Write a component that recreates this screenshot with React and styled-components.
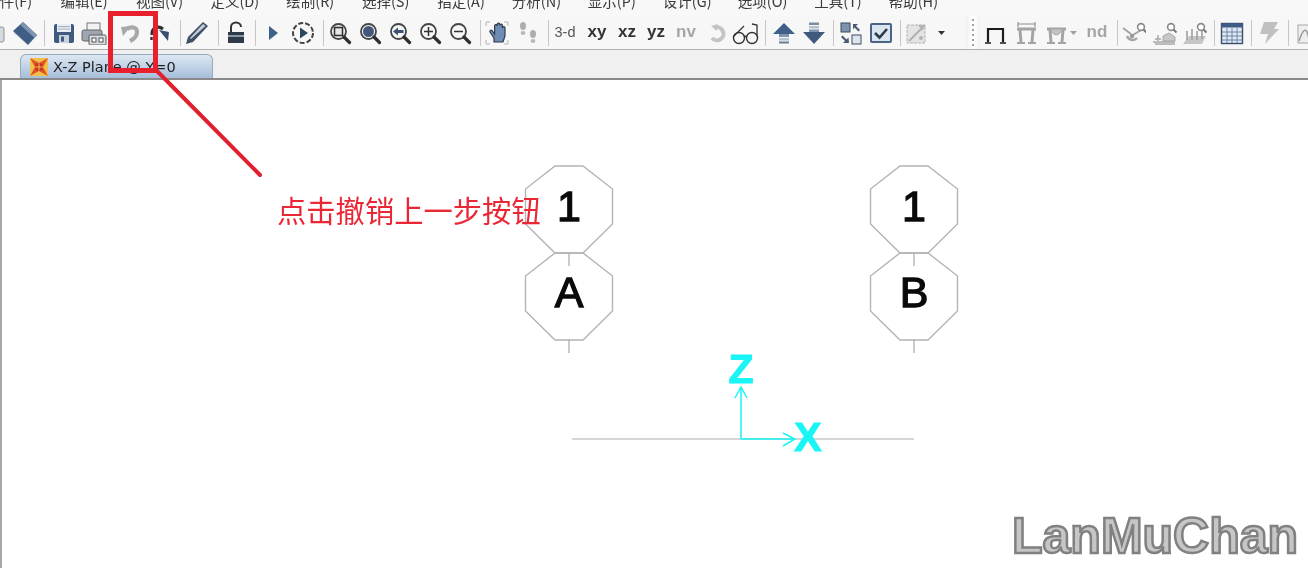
import React from "react";
import styled, { createGlobalStyle } from "styled-components";

const GlobalStyle = createGlobalStyle`
  html, body {
    margin: 0;
    height: 100%;
    overflow: hidden;
    background: #fff;
  }
`;

const Window = styled.div`
  position: relative;
  width: 1308px;
  height: 568px;
  display: flex;
  flex-direction: column;
  overflow: hidden;
  font-family: "Liberation Sans", Arial, sans-serif;
  filter: blur(0.4px);
`;

const MenuBar = styled.div`
  height: 16px;
  flex: none;
  display: flex;
  align-items: flex-start;
  overflow: hidden;
  background: #f8f8f8;
`;

const MenuRow = styled.div`
  display: flex;
  margin: -7px 0 0 -29px;
`;

const MenuItem = styled.span`
  flex: none;
  width: 75.4px;
  text-align: center;
  font: 14.5px/15px "Noto Sans CJK SC", "Liberation Sans", sans-serif;
  color: #3a3a3a;
`;

const Toolbar = styled.div`
  height: 33px;
  flex: none;
  display: flex;
  align-items: center;
  overflow: hidden;
  background: #f7f7f7;
  border-bottom: 1px solid #aeaeae;
`;

const Tool = styled.div`
  flex: none;
  width: ${(p) => p.$w || 30}px;
  margin-left: ${(p) => p.$ml || 0}px;
  height: 100%;
  display: flex;
  align-items: center;
  justify-content: center;
`;

const ClippedTool = styled(Tool)`
  justify-content: flex-end;
  overflow: hidden;
`;

const Separator = styled.div`
  flex: none;
  width: ${(p) => p.$w || 10}px;
  margin-left: ${(p) => p.$ml || 0}px;
  height: 26px;
  display: flex;
  justify-content: center;
  &::before {
    content: "";
    width: 1px;
    background: #c6c6c6;
  }
`;

const Grip = styled.div`
  flex: none;
  width: 14px;
  height: 100%;
  margin-left: ${(p) => p.$ml || 0}px;
  background: linear-gradient(90deg, #f1f1f1, #ffffff 55%, #f1f1f1);
  display: flex;
  flex-direction: column;
  justify-content: center;
  align-items: center;
  gap: 3px;
  & > i {
    width: 2px;
    height: 2px;
    background: #a0a0a0;
  }
`;

const TextTool = styled(Tool)`
  font-size: ${(p) => p.$size || 17}px;
  font-weight: ${(p) => (p.$plain ? 400 : 700)};
  color: ${(p) => p.$color || "#333"};
  padding-bottom: 2px;
  box-sizing: border-box;
`;

const TabStrip = styled.div`
  height: 28px;
  flex: none;
  display: flex;
  align-items: flex-end;
  padding-left: 20px;
  background: #f0f0f0;
  border-bottom: 2px solid #8a8a8a;
`;

const Tab = styled.div`
  width: 193px;
  height: 24px;
  box-sizing: border-box;
  display: flex;
  align-items: center;
  gap: 5px;
  padding-left: 9px;
  border: 1px solid #97a9be;
  border-bottom: none;
  border-radius: 6px 6px 0 0;
  background: linear-gradient(180deg, #dde7f2, #a6bedb);
  font: 14.5px "DejaVu Sans", sans-serif;
  color: #222;
  white-space: nowrap;
`;

const Canvas = styled.div`
  flex: 1;
  min-height: 0;
  background: #fff;
  border-left: 2px solid #a8a8a8;
`;

const Drawing = styled.svg`
  display: block;
  margin-left: -2px;
`;

const BubbleLabel = styled.text`
  font-family: "Liberation Sans", Arial, sans-serif;
  font-size: 43px;
  fill: #0a0a0a;
  stroke: #0a0a0a;
  stroke-width: 1.3px;
  text-anchor: middle;
`;

const AxisLabel = styled.text`
  font-family: "Liberation Sans", Arial, sans-serif;
  font-size: 41px;
  font-weight: 700;
  fill: #19f5f5;
  stroke: #19f5f5;
  stroke-width: 1px;
  text-anchor: middle;
`;

const CalloutBox = styled.div`
  position: absolute;
  left: 108px;
  top: 11px;
  width: 50px;
  height: 62px;
  box-sizing: border-box;
  border: 5px solid #e8202e;
`;

const CalloutLine = styled.svg`
  position: absolute;
  left: 150px;
  top: 65px;
`;

const CalloutText = styled.div`
  position: absolute;
  left: 277px;
  top: 188px;
  font: 29.3px/42px "Noto Sans CJK SC", sans-serif;
  color: #ea2735;
  white-space: nowrap;
`;

const Watermark = styled.div`
  position: absolute;
  left: 1012px;
  top: 507px;
  font: 700 50px/58px "Liberation Sans", Arial, sans-serif;
  color: #c6c6c6;
  -webkit-text-stroke: 2.5px #818181;
  white-space: nowrap;
`;

const I = ({ w = 24, h = 24, children }) => (
  <svg width={w} height={h} viewBox={`0 0 ${w} ${h}`} style={{ flex: "none" }}>
    {children}
  </svg>
);

const Lens = ({ children, stroke = "#444" }) => (
  <I>
    <circle cx="10.5" cy="10.5" r="7.5" fill="#f4f6f8" stroke={stroke} strokeWidth="1.8" />
    <path d="M16 16l5.5 5.5" stroke="#2f2f2f" strokeWidth="3.2" strokeLinecap="round" />
    {children}
  </I>
);

const Frame = ({ color = "#a4a4a4", children }) => (
  <I w={28}>
    <path d="M5 8h19" stroke={color} strokeWidth="3" />
    <path d="M8 9L9 21M21 9L20 21" stroke={color} strokeWidth="3" fill="none" />
    <path d="M5 22h8M16 22h8" stroke={color} strokeWidth="1.8" />
    {children}
  </I>
);

const Magnifier = () => (
  <g>
    <circle cx="19" cy="6" r="3.4" fill="#fff" stroke="#8a8a8a" strokeWidth="1.6" />
    <path d="M21.5 8.5l3 3" stroke="#777" strokeWidth="2" />
  </g>
);

const icons = {
  clip: (
    <I w={8}>
      <rect x="-12" y="6" width="16" height="15" rx="2" fill="#d5dadf" stroke="#8d949c" />
    </I>
  ),
  tag: (
    <I w={26}>
      <path d="M1 10 L11 1 L25 14 L16 24 Z" fill="#3f5e84" />
      <path d="M11 1 L25 14 L22.5 17 L8.5 4 Z" fill="#7f96b0" />
      <path d="M1 10 L16 24 L17 25 L2 12Z" fill="#9fb0c2" />
    </I>
  ),
  save: (
    <I>
      <rect x="2" y="3" width="20" height="19" rx="2" fill="#3f5a7e" />
      <rect x="5" y="3" width="14" height="8" fill="#e8edf2" />
      <path d="M6 5.5h12M6 8h12" stroke="#9fb0c2" />
      <rect x="7" y="14" width="10" height="8" fill="#c8d2dd" />
      <rect x="9" y="15.5" width="3" height="5" fill="#3f5a7e" />
    </I>
  ),
  print: (
    <I w={26}>
      <rect x="6" y="2" width="13" height="8" fill="#f2f2f2" stroke="#777" />
      <rect x="1" y="9" width="20" height="11" rx="2" fill="#9ea6b0" stroke="#666" />
      <rect x="8" y="14" width="17" height="10" rx="1" fill="#d8dde2" stroke="#5a5a5a" />
      <rect x="11" y="17" width="4" height="4" fill="#fff" stroke="#555" />
      <rect x="18" y="17" width="4" height="4" fill="#fff" stroke="#555" />
    </I>
  ),
  undo: (
    <I>
      <path d="M9 8 C13 5 19 6 19 11 C19 15 16 18 12 20" fill="none" stroke="#a8a8a8" strokeWidth="4.2" />
      <path d="M3 6 L13 5 L5 15 Z" fill="#a8a8a8" />
    </I>
  ),
  redo: (
    <I>
      <path d="M4 14 C3 7 10 4 15 8" fill="none" stroke="#2e2e2e" strokeWidth="3" />
      <path d="M3.5 16v3" stroke="#2e2e2e" strokeWidth="2.4" />
      <path d="M11 9 L21 11 L20 20 Z" fill="#3b4f6a" />
    </I>
  ),
  pencil: (
    <I>
      <path d="M18 1 L23 5 L8 21 L1 23 L3 16 Z" fill="#3f5068" />
      <path d="M18 3 L20.5 5 L6 18 L5 17 Z" fill="#c4ced8" />
    </I>
  ),
  lock: (
    <I w={18}>
      <path d="M4 11 V6 a5 4.5 0 0 1 10 0" fill="none" stroke="#333" strokeWidth="2" />
      <rect x="1" y="11" width="16" height="11" fill="#2e3a48" />
      <rect x="1" y="14" width="16" height="2" fill="#8b98a6" />
    </I>
  ),
  play: (
    <I w={12}>
      <path d="M2 5 L11 12 L2 19 Z" fill="#3a6288" />
    </I>
  ),
  cplay: (
    <I>
      <circle cx="12" cy="12" r="10" fill="none" stroke="#444" strokeWidth="2" strokeDasharray="5 2" />
      <path d="M9 6.5 L17 12 L9 17.5 Z" fill="#2f4662" />
    </I>
  ),
  zoomBox: (
    <Lens>
      <rect x="6.5" y="6.5" width="8" height="8" fill="#e6e9ec" stroke="#333" strokeWidth="1.6" />
    </Lens>
  ),
  zoomAll: (
    <Lens>
      <circle cx="10.5" cy="10.5" r="5.5" fill="#44597a" />
    </Lens>
  ),
  zoomPrev: (
    <Lens>
      <path d="M5 10.5 L10 6.5 V9 H15.5 V12 H10 V14.5 Z" fill="#3b5270" />
    </Lens>
  ),
  zoomIn: (
    <Lens>
      <path d="M6 10.5h9M10.5 6v9" stroke="#333" strokeWidth="1.5" />
    </Lens>
  ),
  zoomOut: (
    <Lens>
      <path d="M6 10.5h9" stroke="#333" strokeWidth="1.5" />
    </Lens>
  ),
  hand: (
    <I>
      <path d="M1 5V1h4M19 1h4v4M1 19v4h4M19 23h4v-4" fill="none" stroke="#b5b5b5" />
      <path d="M5 11 L9 17 V21 H18 L20 15 V7 a1.3 1.3 0 0 0 -2.6 0 V4.5 a1.3 1.3 0 0 0 -2.6 0 V3.5 a1.3 1.3 0 0 0 -2.6 0 V5 a1.3 1.3 0 0 0 -2.6 0 V13 L7 9.5 a1.3 1.3 0 0 0 -2 1.5Z" fill="#6f8cb4" stroke="#2f3a4a" strokeWidth="1.2" />
    </I>
  ),
  foot: (
    <I>
      <ellipse cx="7" cy="5" rx="3" ry="4" fill="#adadad" />
      <ellipse cx="7" cy="12" rx="2.4" ry="2" fill="#b8b8b8" />
      <ellipse cx="17" cy="13" rx="3" ry="4" fill="#adadad" />
      <ellipse cx="17" cy="20" rx="2.4" ry="2" fill="#b8b8b8" />
    </I>
  ),
  rot: (
    <I>
      <path d="M9 7 A6.5 6.5 0 1 1 7 17" fill="none" stroke="#c4c4c4" strokeWidth="4" />
      <path d="M6 5 L13 3 L12 10 Z" fill="#c4c4c4" />
    </I>
  ),
  glasses: (
    <I w={28}>
      <circle cx="7" cy="17" r="5.5" fill="none" stroke="#333" strokeWidth="1.4" />
      <circle cx="20" cy="17" r="5.5" fill="none" stroke="#333" strokeWidth="1.4" />
      <path d="M12 16q1.5-1.5 3 0M2 15 L12 5M25 15 V4 L20 3" fill="none" stroke="#333" strokeWidth="1.3" />
    </I>
  ),
  up: (
    <I>
      <path d="M12 2 L23 13 H1 Z" fill="#3f6189" />
      <rect x="7" y="13" width="10" height="3" fill="#7b94b1" />
      <rect x="7" y="17" width="10" height="2.5" fill="#b4c0cc" />
      <rect x="7" y="20.5" width="10" height="2" fill="#6f7f92" />
    </I>
  ),
  down: (
    <I>
      <rect x="7" y="1.5" width="10" height="2.5" fill="#7f8da0" />
      <rect x="7" y="5" width="10" height="2.5" fill="#b4c0cc" />
      <rect x="7" y="8.5" width="10" height="3" fill="#7b94b1" />
      <path d="M12 23 L23 11 H1 Z" fill="#3f5a7c" />
    </I>
  ),
  fit: (
    <I>
      <rect x="2" y="2" width="9" height="9" fill="#7f93ad" stroke="#3b4a5e" />
      <rect x="13" y="14" width="9" height="9" fill="#dfe5ec" stroke="#3b4a5e" />
      <path d="M14 3 h5 l-2 2 4 4 -1.5 1.5 -4 -4 -1.5 2Z" fill="#4a5a70" />
      <path d="M10 22 h-6 l2 -2 -4 -4 1.5 -1.5 4 4 2 -2Z" fill="#4a5a70" />
    </I>
  ),
  check: (
    <I>
      <rect x="2" y="3" width="20" height="18" rx="1" fill="#dbe5f0" stroke="#4a6486" strokeWidth="2" />
      <path d="M6 12 L10.5 16.5 L18 8" fill="none" stroke="#2c3a4c" strokeWidth="2.6" />
    </I>
  ),
  draw: (
    <I>
      <rect x="2" y="4" width="18" height="18" fill="#e4e4e4" stroke="#b2b2b2" strokeDasharray="3 1" />
      <path d="M4 20 L16 8" stroke="#b0b0b0" strokeWidth="2" />
      <path d="M13 4h8l-4 6Z" fill="#b4b4b4" />
      <circle cx="16" cy="17" r="2" fill="#b4b4b4" />
    </I>
  ),
  caret: (
    <I w={8} h={6}>
      <path d="M0 1h7L3.5 5Z" fill="#333" />
    </I>
  ),
  caretGrey: (
    <I w={8} h={6}>
      <path d="M0 1h7L3.5 5Z" fill="#a0a0a0" />
    </I>
  ),
  portal: (
    <I w={28}>
      <path d="M7 8h15M7 7v14M22 7v14" stroke="#1c1c1c" strokeWidth="2.2" fill="none" />
      <path d="M4 22h6M19 22h6" stroke="#1c1c1c" strokeWidth="1.6" />
    </I>
  ),
  portalDim: (
    <Frame>
      <path d="M6 1v5M23 1v5M6 3h17" stroke="#8d8d8d" strokeWidth="1.1" fill="none" />
    </Frame>
  ),
  portalWave: (
    <Frame>
      <path d="M8 8 Q14 20 21 8 Z" fill="#c4c4c4" stroke="#a4a4a4" />
    </Frame>
  ),
  joint: (
    <I>
      <path d="M1 7 L9 13M19 9 L11 14" stroke="#a4a4a4" strokeWidth="2" />
      <path d="M5 15 a6 6 0 0 0 10 2" fill="none" stroke="#a4a4a4" strokeWidth="2.4" />
      <circle cx="10" cy="15" r="2.2" fill="#999" />
      <Magnifier />
    </I>
  ),
  base: (
    <I w={26}>
      <path d="M1 21h22M3 23h20M6 14v6M3 18h6" stroke="#a8a8a8" strokeWidth="1.5" />
      <path d="M11 20 V15 L17 12 L23 16 V20Z" fill="#c8c8c8" stroke="#a4a4a4" />
      <Magnifier />
    </I>
  ),
  base3: (
    <I w={26}>
      <path d="M1 23 L7 15 H24 L20 23 Z" fill="#c6c6c6" />
      <path d="M5 10v9M10 8v11M15 10v9M20 9v9" stroke="#9c9c9c" strokeWidth="1.5" />
      <Magnifier />
    </I>
  ),
  table: (
    <I>
      <rect x="1.5" y="2.5" width="21" height="20" fill="#dfe8f3" stroke="#3c4f68" strokeWidth="1.4" />
      <rect x="1.5" y="2.5" width="21" height="4" fill="#3f5c86" />
      <path d="M2 11h20M2 15h20M2 19h20M7 7v15M12 7v15M17 7v15" stroke="#6c86a8" />
    </I>
  ),
  bolt: (
    <I>
      <path d="M7 1h14l-4 7h5L8 23l3-10H3Z" fill="#c0c0c0" />
    </I>
  ),
  last: (
    <I>
      <rect x="1" y="4" width="22" height="18" fill="#eee" stroke="#a8a8a8" />
      <path d="M2 20 Q8 2 11 14 T22 18" fill="none" stroke="#999" strokeWidth="1.5" />
    </I>
  ),
};

const menus = ["文件(F)", "编辑(E)", "视图(V)", "定义(D)", "绘制(R)", "选择(S)", "指定(A)", "分析(N)", "显示(P)", "设计(G)", "选项(O)", "工具(T)", "帮助(H)"];

// [kind, name or label, width, margin-left]
const tools = [
  ["icon", "tag", 30, 2],
  ["sep", "", 9],
  ["icon", "save"],
  ["icon", "print"],
  ["icon", "undo", 30, 6],
  ["icon", "redo"],
  ["sep", "", 10],
  ["icon", "pencil", 24],
  ["sep", "", 18],
  ["icon", "lock", 18],
  ["sep", "", 20],
  ["icon", "play", 16],
  ["icon", "cplay", 30, 7],
  ["sep", "", 10],
  ["icon", "zoomBox", 24],
  ["icon", "zoomAll", 30, 3],
  ["icon", "zoomPrev"],
  ["icon", "zoomIn"],
  ["icon", "zoomOut"],
  ["sep", "", 10],
  ["icon", "hand", 24],
  ["icon", "foot", 30, 4],
  ["sep", "", 10],
  ["plain", "3-d", 24],
  ["bold", "xy", 30, 5],
  ["bold", "xz"],
  ["bold", "yz", 28],
  ["dim", "nv", 30, 1],
  ["icon", "rot", 30, 1],
  ["icon", "glasses", 28],
  ["sep", "", 10],
  ["icon", "up", 28],
  ["icon", "down", 28, 2],
  ["sep", "", 10],
  ["icon", "fit", 26],
  ["icon", "check", 30, 2],
  ["sep", "", 8],
  ["icon", "draw", 26],
  ["icon", "caret", 12, 6],
  ["grip", "", 14, 18],
  ["icon", "portal", 26, 2],
  ["icon", "portalDim", 26, 5],
  ["icon", "portalWave", 28, 3],
  ["icon", "caretGrey", 8],
  ["dim", "nd", 28, 5],
  ["sep", "", 10, 1],
  ["icon", "joint", 24],
  ["icon", "base", 30, 4],
  ["icon", "base3"],
  ["sep", "", 8],
  ["icon", "table", 28],
  ["sep", "", 10],
  ["icon", "bolt", 26],
  ["sep", "", 12],
  ["icon", "last", 30],
];

const renderTool = ([kind, name, w, ml], i) => {
  if (kind === "sep") return <Separator key={i} $w={w} $ml={ml} />;
  if (kind === "grip") {
    return (
      <Grip key={i} $ml={ml}>
        {Array.from({ length: 6 }, (_, d) => (
          <i key={d} />
        ))}
      </Grip>
    );
  }
  if (kind === "plain") return <TextTool key={i} $w={w} $ml={ml} $plain $size={14.5} $color="#555">{name}</TextTool>;
  if (kind === "bold") return <TextTool key={i} $w={w} $ml={ml}>{name}</TextTool>;
  if (kind === "dim") return <TextTool key={i} $w={w} $ml={ml} $color="#a6a6a6">{name}</TextTool>;
  return <Tool key={i} $w={w} $ml={ml}>{icons[name]}</Tool>;
};

const Octagon = ({ cx, top }) => {
  const pts = [
    [-14, 0], [14, 0], [43.5, 23], [43.5, 58], [14, 87], [-14, 87], [-43.5, 58], [-43.5, 23],
  ].map(([x, y]) => `${cx + x},${top + y}`);
  return <polygon points={pts.join(" ")} fill="none" stroke="#b4b4b4" strokeWidth="1.4" />;
};

const GridBubble = ({ cx, label }) => (
  <g>
    <Octagon cx={cx} top={165} />
    <Octagon cx={cx} top={252} />
    <path d={`M${cx} 252v13M${cx} 338v14`} stroke="#b4b4b4" strokeWidth="1.4" />
    <BubbleLabel x={cx} y={220}>1</BubbleLabel>
    <BubbleLabel x={cx} y={306}>{label}</BubbleLabel>
  </g>
);

const TabIcon = () => (
  <svg width="18" height="18" viewBox="0 0 18 18" style={{ flex: "none" }}>
    <rect width="18" height="18" fill="#f2c04a" />
    <path d="M0 0L9 5 18 0 13 9 18 18 9 13 0 18 5 9Z" fill="#e0552a" />
    <rect x="5.5" y="5.5" width="7" height="7" fill="#c8321e" />
    <path d="M9 5.5v7M5.5 9h7" stroke="#f2c04a" />
  </svg>
);

export default function App() {
  return (
    <Window>
      <GlobalStyle />
      <MenuBar>
        <MenuRow>
          {menus.map((m) => (
            <MenuItem key={m}>{m}</MenuItem>
          ))}
        </MenuRow>
      </MenuBar>
      <Toolbar>
        <ClippedTool $w={8}>{icons.clip}</ClippedTool>
        {tools.map(renderTool)}
      </Toolbar>
      <TabStrip>
        <Tab>
          <TabIcon />
          X-Z Plane @ Y=0
        </Tab>
      </TabStrip>
      <Canvas>
        <Drawing width="1308" height="489" viewBox="0 79 1308 489">
          <GridBubble cx={569} label="A" />
          <GridBubble cx={914} label="B" />
          <path d="M572 438H914" stroke="#c8c8c8" strokeWidth="1.4" />
          <g fill="none" stroke="#19f5f5" strokeWidth="1.5">
            <path d="M741 438V386M735 397L741 386L747 397" />
            <path d="M741 438H795M783 432L795 438L783 445" />
          </g>
          <AxisLabel x={741} y={382}>Z</AxisLabel>
          <AxisLabel x={808} y={450}>X</AxisLabel>
        </Drawing>
      </Canvas>
      <CalloutBox />
      <CalloutLine width="115" height="115" viewBox="150 65 115 115">
        <path d="M157 71L260 175" stroke="#e0202e" strokeWidth="4" strokeLinecap="round" />
      </CalloutLine>
      <CalloutText>点击撤销上一步按钮</CalloutText>
      <Watermark>LanMuChan</Watermark>
    </Window>
  );
}
